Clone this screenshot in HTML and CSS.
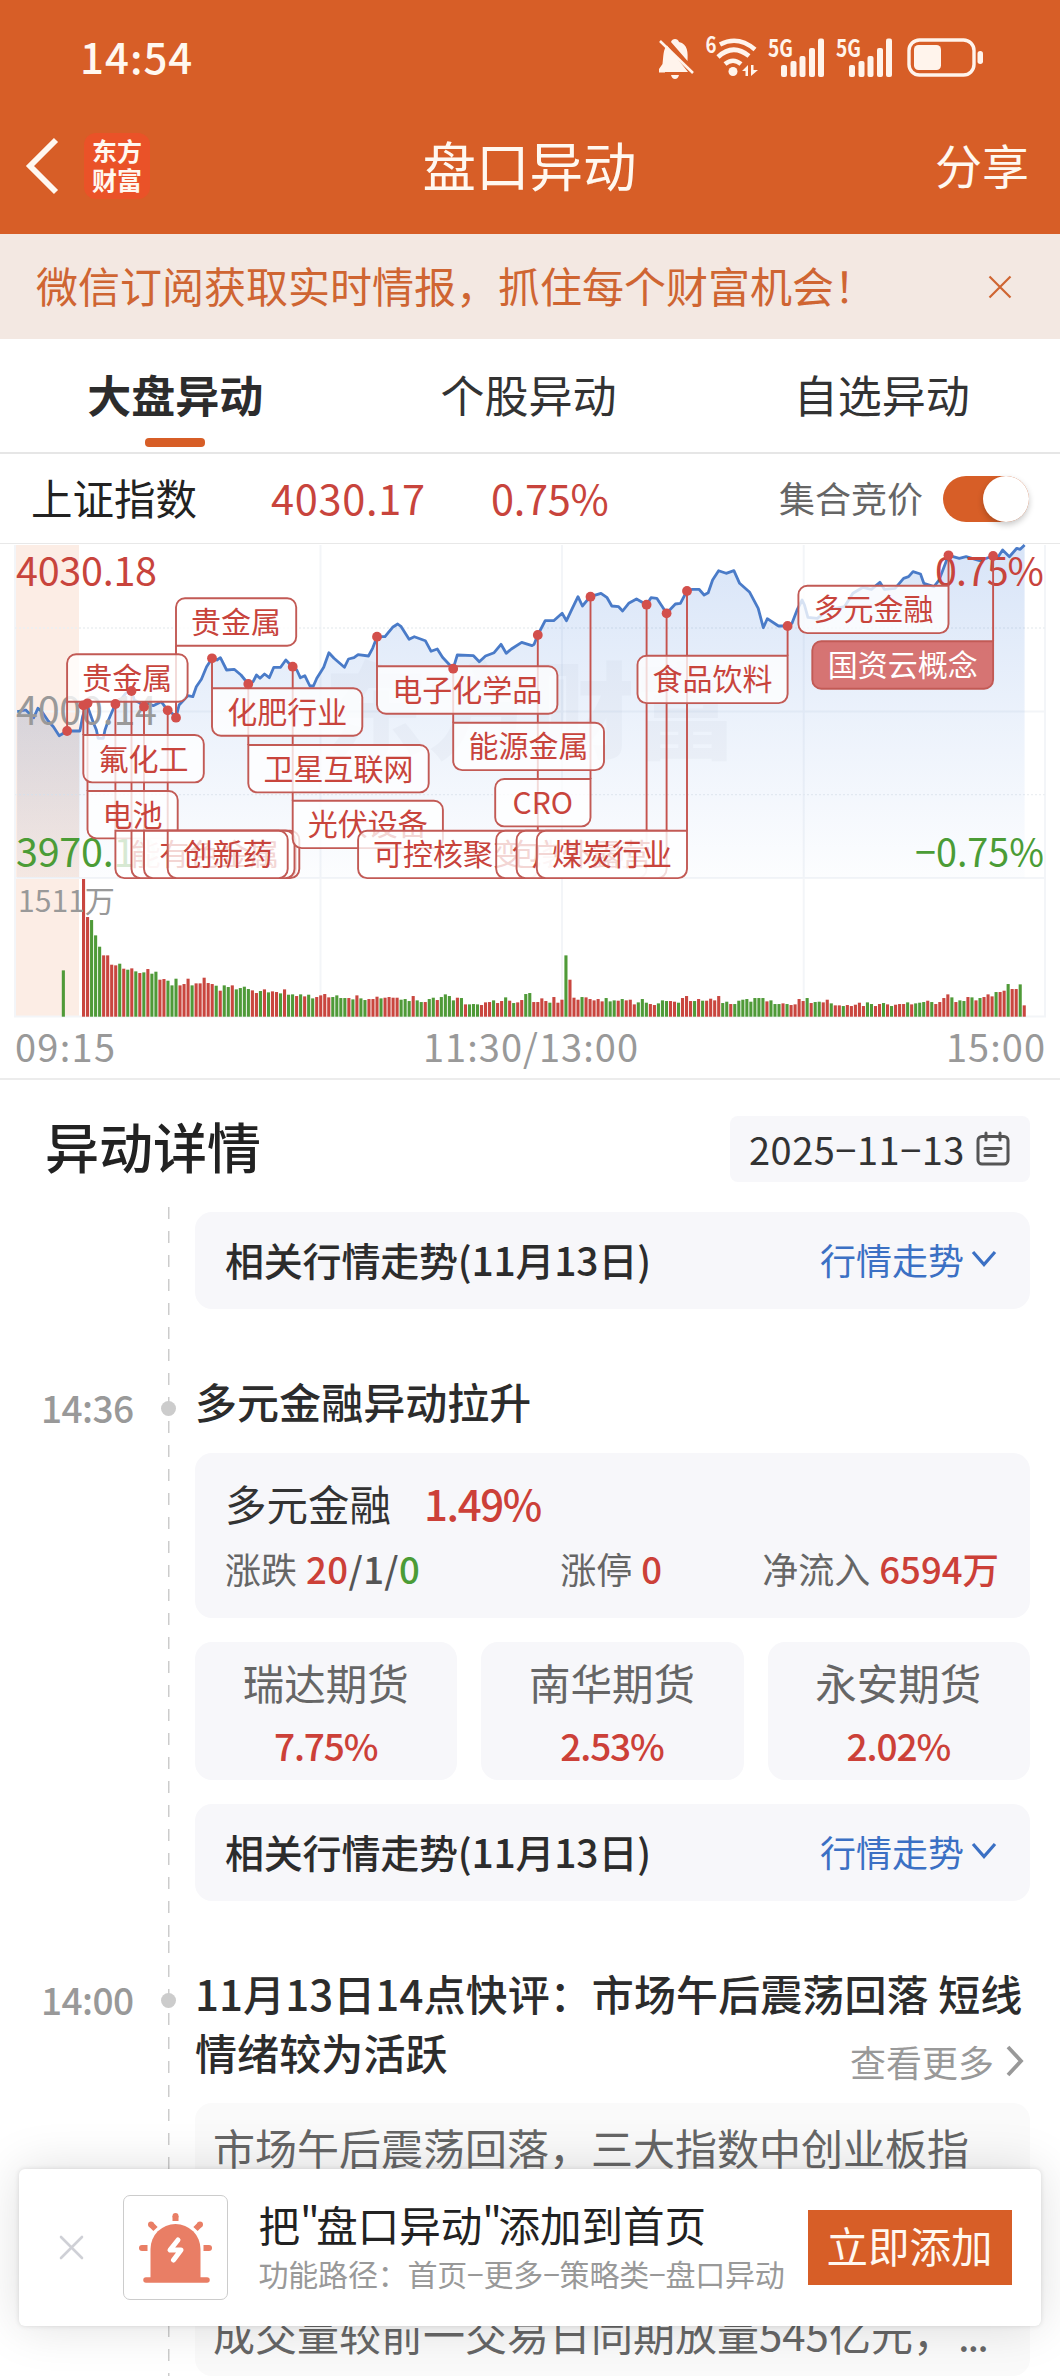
FILE: index.html
```html
<!DOCTYPE html>
<html lang="zh-CN">
<head>
<meta charset="utf-8">
<title>盘口异动</title>
<link rel="stylesheet" href="styles.css">
</head>
<body>
<div class="page">
  <header class="header">
    <div class="status">
      <span class="clock">14:54</span>
      <svg width="350" height="60" viewBox="640 30 350 60" fill="#fff4ec">
        <path d="M665 72.500V72H688L667 45.500C663 49 663.500 57 662.500 64L659 69V72.500ZM671 42C672 38 678 38 679 42C688 44 688 53 687.500 61Z"/>
        <path d="M671 75H679Q678 79 675 79T671 75Z"/>
        <path d="M660 41L693 73" stroke="#fff4ec" stroke-width="2.600"/>
        <text x="705.500" y="53" font-size="22" font-weight="700" textLength="11" lengthAdjust="spacingAndGlyphs">6</text>
        <g fill="none" stroke="#fff4ec" stroke-width="4.600">
          <path d="M720 44.500Q738 35 755 49.500"/>
          <path d="M718 57Q733 43 749 56"/>
          <path d="M725 64Q733 57.500 741 64"/>
        </g>
        <circle cx="733" cy="71.500" r="4.500"/>
        <path d="M742 71L748 65V76H745.500V71ZM751 65V76L758 70H753.500V65Z"/>
        <text x="768" y="56.500" font-size="24" font-weight="700" textLength="25" lengthAdjust="spacingAndGlyphs">5G</text>
        <text x="836" y="56.500" font-size="24" font-weight="700" textLength="25" lengthAdjust="spacingAndGlyphs">5G</text>
        <g id="bars">
          <rect x="781" y="65" width="6" height="12" rx="2"/><rect x="790.500" y="61" width="6" height="16" rx="2"/><rect x="799.500" y="56" width="6" height="21" rx="2"/><rect x="809" y="48" width="6" height="29" rx="2"/><rect x="818" y="38.500" width="6" height="38.500" rx="2"/>
        </g>
        <use href="#bars" x="68"/>
        <rect x="909" y="40" width="65" height="35" rx="10.500" fill="none" stroke="#fff4ec" stroke-width="3.400"/>
        <rect x="914" y="45" width="27" height="25" rx="4.500"/>
        <rect x="977.500" y="51" width="5.500" height="13" rx="2.700"/>
      </svg>
    </div>
    <nav class="nav">
      <div class="nav-left">
        <svg width="34" height="58" viewBox="0 0 34 58" fill="none" stroke="#fff8f0" stroke-width="5.800"><path d="M31 3L5 29L31 55"/></svg>
        <div class="logo"><span>东方</span><span>财富</span></div>
      </div>
      <h1 class="nav-title">盘口异动</h1>
      <span class="share">分享</span>
    </nav>
  </header>

  <div class="notice">
    <span>微信订阅获取实时情报，抓住每个财富机会！</span>
    <svg width="24" height="24" viewBox="0 0 24 24" stroke="#cf6532" stroke-width="2.200"><path d="M1.500 1.500L22.500 22.500M22.500 1.500L1.500 22.500"/></svg>
  </div>

  <div class="tabs">
    <div class="tab active">大盘异动</div>
    <div class="tab">个股异动</div>
    <div class="tab">自选异动</div>
  </div>

  <div class="index-row">
    <span class="index-name">上证指数</span>
    <span class="index-value">4030.17</span>
    <span class="index-pct">0.75%</span>
    <span class="auction">集合竞价</span>
    <span class="toggle"><i></i></span>
  </div>

  <svg class="chart" id="chart" viewBox="0 544 1060 534">
    <defs>
      <linearGradient id="fill" gradientUnits="userSpaceOnUse" x1="0" y1="545" x2="0" y2="878">
        <stop offset="0" stop-color="#6f9de4" stop-opacity=".27"/>
        <stop offset=".5" stop-color="#6f9de4" stop-opacity=".14"/>
        <stop offset="1" stop-color="#6f9de4" stop-opacity=".02"/>
      </linearGradient>
      <linearGradient id="pre" gradientUnits="userSpaceOnUse" x1="0" y1="700" x2="0" y2="878">
        <stop offset="0" stop-color="#8490a8" stop-opacity=".18"/>
        <stop offset="1" stop-color="#8490a8" stop-opacity=".04"/>
      </linearGradient>
    </defs>
    <rect x="15.500" y="545" width="63.500" height="471.500" fill="#fcede5"/>
    <g stroke="#f3f5f8" stroke-width="2" fill="none">
      <path d="M15 545V1016.500H1045V545M15 878H1045M15 711.500H1045M320.500 545V1016M562 545V1016M803.700 545V1016"/>
      <path d="M15 628H1045M15 794.700H1045" stroke="#eceff2" stroke-width="1.300" stroke-dasharray="2 2"/>
    </g>
    <text class="watermark" x="324" y="750" textLength="414" lengthAdjust="spacingAndGlyphs">东方财富</text>
    <g id="price"></g>
    <g id="volume"></g>
    <g class="axis">
      <text class="up" x="16" y="585.500" textLength="141">4030.18</text>
      <text class="flat" x="16" y="725" textLength="141">4000.14</text>
      <text class="down" x="16" y="866.500" textLength="141">3970.10</text>
      <text class="up" x="935" y="585.500" textLength="109">0.75%</text>
      <text class="down" x="915" y="866.500" textLength="129" lengthAdjust="spacingAndGlyphs">−0.75%</text>
      <text class="vol" x="18" y="911.500" textLength="97" lengthAdjust="spacingAndGlyphs">1511万</text>
      <text class="time-label" x="15" y="1062" textLength="100">09:15</text>
      <text class="time-label" x="423" y="1062" textLength="215">11:30/13:00</text>
      <text class="time-label" x="946" y="1062" textLength="99">15:00</text>
    </g>
    <g id="labels"></g>
  </svg>

  <section class="detail-head">
    <h2>异动详情</h2>
    <div class="date">
      <span>2025−11−13</span>
      <svg width="34" height="36" viewBox="0 0 34 36" fill="none" stroke="#555" stroke-width="3" stroke-linecap="round"><rect x="2" y="5.500" width="30" height="27.500" rx="4"/><path d="M10 2V9M24 2V9M9 17.500H25M9 24.500H20"/></svg>
    </div>
  </section>

  <main class="timeline">
    <article class="item first">
      <div></div>
      <div class="rail"></div>
      <div class="body">
        <div class="card trend"><b>相关行情走势(11月13日)</b><span class="link">行情走势<svg width="26" height="18" viewBox="0 0 26 18" fill="none" stroke="#3b70c4" stroke-width="3.200"><path d="M2 2L13 14.500L24 2"/></svg></span></div>
      </div>
    </article>

    <article class="item second">
      <time>14:36</time>
      <div class="rail"><i></i></div>
      <div class="body">
        <h3>多元金融异动拉升</h3>
        <div class="card sector">
          <div class="sector-name"><span>多元金融</span><b class="up">1.49%</b></div>
          <div class="sector-stats">
            <span>涨跌 <b class="ratio"><em class="up">20</em>/1/<em class="down">0</em></b></span>
            <span class="limit">涨停 <b class="up">0</b></span>
            <span>净流入 <b class="up">6594万</b></span>
          </div>
        </div>
        <div class="stocks">
          <div class="stock"><span>瑞达期货</span><b>7.75%</b></div>
          <div class="stock"><span>南华期货</span><b>2.53%</b></div>
          <div class="stock"><span>永安期货</span><b>2.02%</b></div>
        </div>
        <div class="card trend"><b>相关行情走势(11月13日)</b><span class="link">行情走势<svg width="26" height="18" viewBox="0 0 26 18" fill="none" stroke="#3b70c4" stroke-width="3.200"><path d="M2 2L13 14.500L24 2"/></svg></span></div>
      </div>
    </article>

    <article class="item third">
      <time>14:00</time>
      <div class="rail"><i></i></div>
      <div class="body">
        <div class="news-title">
          <h3>11月13日14点快评：市场午后震荡回落 短线<br>情绪较为活跃</h3>
          <span class="more">查看更多<svg width="18" height="32" viewBox="0 0 18 32" fill="none" stroke="#999" stroke-width="3.800"><path d="M2 2L15 16L2 30"/></svg></span>
        </div>
        <div class="news">
          <p>市场午后震荡回落，三大指数中创业板指</p>
          <p class="tail"><span>成交量较前一交易日同期放量545亿元，</span><span class="dots">...</span></p>
        </div>
      </div>
    </article>
  </main>

  <aside class="prompt">
    <svg width="25" height="25" viewBox="0 0 25 25" stroke="#cfd0d6" stroke-width="2.600" stroke-linecap="round"><path d="M2 2L23 23M23 2L2 23"/></svg>
    <div class="siren">
      <svg width="73" height="71" viewBox="0 0 73 71">
        <g stroke="#e97e65" stroke-width="6" fill="none">
          <path d="M36.500 4V9M12 12.500L16.500 17M61 12.500L56.500 17M3 36H8.500M70 36H64.500"/>
          <path d="M7 68H68" stroke-width="5.500" stroke-linecap="round"/>
        </g>
        <g fill="#e97e65"><circle cx="36.500" cy="4" r="3"/><circle cx="12" cy="12.500" r="3"/><circle cx="61" cy="12.500" r="3"/><circle cx="3" cy="36" r="3"/><circle cx="70" cy="36" r="3"/>
        <path d="M11.500 68V37A25 25 0 0 1 61.500 37V68Z"/></g>
        <path d="M39 28L31 38H42L34.500 48" fill="none" stroke="#fff" stroke-width="5" stroke-linecap="round" stroke-linejoin="round"/>
      </svg>
    </div>
    <div class="prompt-text">
      <strong>把<q>盘口异动</q>添加到首页</strong>
      <small>功能路径：首页−更多−策略类−盘口异动</small>
    </div>
    <span class="add">立即添加</span>
  </aside>
</div>
<script src="chart.js"></script>
</body>
</html>
```
FILE: styles.css
```css
* { box-sizing: border-box; }
body {
  margin: 0;
  background: #fff;
  color: #2c2c2c;
  font-family: "Noto Sans CJK SC", "Liberation Sans", sans-serif;
}
h1, h2, h3, p { margin: 0; font-weight: 400; }
em, i { font-style: normal; }
b { font-weight: 500; }
q { quotes: '"' '"'; }
q::before, q::after { letter-spacing: -3.5px; }
svg { display: block; flex: none; }
.up { color: #cc4038; fill: #c8443c; }
.down { color: #4b9c36; fill: #4b9c36; }

.page { position: relative; width: 1060px; height: 2376px; overflow: hidden; }

.header { height: 234px; background: #d75e27; color: #fff8f0; }
.status { display: flex; justify-content: space-between; height: 116px; padding: 30px 70px 0 80px; }
.clock { font-size: 42px; line-height: 52px; font-weight: 500; letter-spacing: 1px; }
.nav { display: grid; grid-template-columns: 1fr auto 1fr; align-items: center; height: 100px; padding: 0 31px 0 25px; }
.nav-left { display: flex; align-items: center; gap: 25px; }
.logo {
  display: flex; flex-direction: column; align-items: center; justify-content: center;
  width: 66px; height: 66px; border-radius: 12px; background: #ea5228;
  font-size: 25px; line-height: 29px; font-weight: 700; padding-bottom: 2px;
}
.nav-title { font-size: 53.5px; line-height: 60px; padding-bottom: 4px; margin-left: 5px; }
.share { justify-self: end; font-size: 47px; line-height: 60px; padding-bottom: 4px; }

.notice {
  display: flex; align-items: center; justify-content: space-between;
  height: 105px; padding: 0 48px 0 36px; background: #f3e8e2;
  color: #cf6532; font-size: 42px; line-height: 60px;
}
.notice span { padding-bottom: 4px; white-space: nowrap; }

.tabs { display: grid; grid-template-columns: repeat(3, 1fr); height: 115px; border-bottom: 2px solid #e6e6e6; }
.tab { display: flex; flex-direction: column; align-items: center; padding: 25px 3px 0 0; font-size: 44px; line-height: 60px; color: #333; }
.active { font-weight: 700; color: #2c2c2c; }
.active::after { content: ""; width: 60px; height: 9px; margin-top: 14px; border-radius: 4px; background: #d75e27; }

.index-row { display: flex; align-items: center; height: 89px; padding: 0 31px; font-size: 41.5px; line-height: 60px; color: #222; }
.index-row > span { padding-bottom: 3px; }
.index-value, .index-pct { color: #c8443c; }
.index-value { width: 220px; margin-left: 74px; letter-spacing: .7px; }
.index-pct { flex: 1; letter-spacing: -.3px; }
.index-row .auction { font-size: 36px; color: #666; margin-right: 20px; }
.index-row .toggle { display: flex; justify-content: flex-end; width: 86px; height: 46px; padding: 0; border-radius: 23px; background: #d75e27; }
.toggle i { width: 46px; height: 46px; border-radius: 50%; background: #fff; box-shadow: 0 3px 6px rgba(0, 0, 0, .22); }

.chart { width: 1060px; height: 537px; border-top: 1px solid #e8e8e8; border-bottom: 2px solid #ececec; }
.chart text { font-family: inherit; }
.watermark { font-size: 105px; font-weight: 900; fill: #5d6b85; opacity: .04; }
.axis text { font-size: 39.5px; }
.axis .flat { fill: #999; }
.axis .vol { font-size: 30px; fill: #999; }
.axis .time-label { font-size: 38px; fill: #999; }
.tag { font-size: 30px; fill: #c8443c; }
.tag-solid { fill: #fff; }

.detail-head { display: flex; justify-content: space-between; align-items: center; padding: 35px 30px 0 45px; height: 102px; }
.detail-head h2 { font-size: 54px; line-height: 66px; font-weight: 500; color: #222; padding-bottom: 5px; }
.date { display: flex; align-items: center; justify-content: space-between; width: 300px; height: 66px; padding: 0 20px 0 19px; border-radius: 8px; background: #f7f7fa; font-size: 38px; line-height: 60px; color: #333; }
.date span { width: 216px; letter-spacing: .5px; white-space: nowrap; }

.timeline { padding-top: 25px; }
.item { display: grid; grid-template-columns: 140px 57px 1fr; margin-right: 30px; }
.first { height: 142px; }
.second { height: 592px; }
.third { height: 500px; }
.item time { padding-top: 28px; padding-left: 41px; font-size: 37px; line-height: 60px; font-weight: 500; letter-spacing: -.6px; color: #999; white-space: nowrap; }
.rail {
  display: flex; justify-content: center; align-items: flex-start;
  background: repeating-linear-gradient(#ccc 0 12px, transparent 12px 24px) center top / 1.5px 100% no-repeat;
}
.rail i { width: 15px; height: 15px; margin-top: 52px; border-radius: 50%; background: #ccc; }
.body { margin-left: -2px; }
.card { border-radius: 17px; background: #f7f7fa; }
.first .card { margin-top: 5px; }
.trend { display: flex; align-items: center; justify-content: space-between; height: 97px; padding: 0 33px 3px 30px; font-size: 39px; line-height: 60px; }
.trend b { color: #2c2c2c; letter-spacing: -.2px; }
.link { display: flex; align-items: center; gap: 7px; font-size: 36px; color: #3b70c4; }
.body h3 { font-size: 42px; line-height: 59px; font-weight: 500; color: #2c2c2c; letter-spacing: .05px; white-space: nowrap; }
.second h3 { padding-top: 22px; height: 104px; }
.sector { height: 165px; padding: 19px 31px 0 30px; }
.sector-name { display: flex; gap: 33px; font-size: 41.5px; line-height: 62px; color: #333; }
.sector-name b { font-size: 42px; letter-spacing: -1.4px; }
.sector-stats { display: flex; justify-content: space-between; font-size: 36px; line-height: 60px; padding-top: 4px; color: #666; white-space: nowrap; }
.sector-stats b { font-size: 36.5px; margin-left: 1px; }
.ratio { color: #555; letter-spacing: .4px; }
.limit { margin-left: 40px; }
.stocks { display: grid; grid-template-columns: repeat(3, 1fr); gap: 24px; margin: 24px 0; }
.stock { display: flex; flex-direction: column; align-items: center; height: 138px; padding: 10px 1px 0 0; border-radius: 17px; background: #f7f7fa; }
.stock span { font-size: 41.5px; line-height: 60px; color: #666; }
.stock b { font-size: 37px; line-height: 66px; letter-spacing: -1.1px; color: #cc4038; }
.news-title { display: flex; align-items: flex-end; height: 162px; padding-top: 22px; }
.third h3 { width: 655px; align-self: flex-start; letter-spacing: .1px; }
.more { display: flex; align-items: center; gap: 12px; padding-bottom: 12px; font-size: 36px; line-height: 60px; color: #999; white-space: nowrap; }
.news { height: 273px; padding: 12px 18px; border-radius: 17px; background: #fafafa; font-size: 42px; line-height: 63px; color: #666; white-space: nowrap; }
.tail { display: flex; gap: 3px; padding-top: 123px; }
.dots { letter-spacing: -2px; }

.prompt {
  position: absolute; left: 18.5px; top: 2169px; width: 1022px; height: 157px;
  display: flex; align-items: center; padding: 0 29px 0 40px;
  border-radius: 6px; background: #fff; box-shadow: 0 0 50px rgba(0, 0, 0, .13), 0 0 5px rgba(0, 0, 0, .12);
}
.siren { display: flex; align-items: center; justify-content: center; width: 105px; height: 105px; margin: 0 31px 0 39px; border: 1.5px solid #ccc; border-radius: 7px; }
.prompt-text { display: flex; flex-direction: column; flex: 1; padding-bottom: 2px; white-space: nowrap; }
.prompt-text strong { font-size: 41.5px; line-height: 52px; font-weight: 400; color: #222; }
.prompt-text small { font-size: 30px; line-height: 46px; letter-spacing: -.2px; color: #999; }
.add { width: 204px; height: 75px; background: #d75e27; color: #fff8f0; font-size: 41.5px; line-height: 71px; text-align: center; white-space: nowrap; }
```
FILE: chart.js
```js
const NS = "http://www.w3.org/2000/svg";
function add(parent, name, attrs, text) {
  const el = document.createElementNS(NS, name);
  for (const k in attrs) el.setAttribute(k, attrs[k]);
  if (text) el.textContent = text;
  parent.appendChild(el);
  return el;
}

// Price series in thirds of a unit: morning session, then afternoon session.
const morning = "50,545 75,540 98,563 110,535 122,545 140,573 155,590 172,617 195,603 232,603 240,560 252,520 258,540 270,575 280,600 285,625 300,625 305,600 315,570 335,522 350,510 365,490 382,483 390,510 405,518 418,530 430,520 445,527 468,515 487,541 500,550 511,563 520,525 545,497 560,500 570,470 585,448 600,410 616,385 630,390 640,383 658,420 680,418 700,435 721,462 735,455 745,435 755,445 768,432 782,443 795,412 815,412 830,390 849,410 862,420 872,443 885,437 900,468 910,468 920,445 940,412 955,368 970,385 1000,412 1012,387 1028,383 1040,374 1070,378 1082,355 1095,320 1118,320 1140,292 1155,282 1165,290 1188,328 1203,320 1235,332 1252,364 1270,357 1285,382 1316,416 1328,375 1375,377 1392,395 1410,378 1435,368 1455,343 1470,370 1485,357 1515,337 1545,347";
const afternoon = "12,343 23,315 45,272 70,272 95,250 108,272 125,235 142,200 155,228 178,200 210,190 228,203 242,228 262,230 274,243 292,220 315,207 345,224 358,203 375,205 388,225 404,250 430,222 445,220 464,183 480,178 500,178 515,195 527,188 540,150 558,122 580,130 603,122 620,160 650,187 675,235 690,293 702,266 735,288 761,288 775,280 790,240 805,210 812,225 822,262 850,265 880,240 930,230 955,190 985,172 1010,178 1035,157 1048,178 1080,175 1105,145 1120,140 1133,125 1155,132 1165,160 1195,170 1210,150 1238,76 1270,85 1290,80 1330,92 1369,78 1385,80 1398,60 1418,80 1440,55 1450,58 1463,45";
const project = (series, x0, sx) => series.split(" ").map(p => {
  const [x, y] = p.split(",").map(Number);
  return [x0 + x / sx, 530 + y / 3];
});
const points = project(morning, 0, 2.904).concat(project(afternoon, 530, 2.958));
const line = "M" + points.map(p => p[0].toFixed(1) + " " + p[1].toFixed(1)).join("L");
const price = document.getElementById("price");
add(price, "path", { d: line + "V878H17Z", fill: "url(#fill)" });
const open = points.filter(p => p[0] < 80);
add(price, "path", { d: "M" + open.map(p => p.join(" ")).join("L") + "V878H17Z", fill: "url(#pre)" });
add(price, "path", { d: line, fill: "none", stroke: "#4a7bc8", "stroke-width": 2.8, "stroke-linejoin": "round" });

// Minute volume: direction and distance of the bar top from the pane top, in thirds.
const volume = "r27 r141 g150 g196 g230 r256 r256 r284 r286 g281 r296 g299 r295 g304 r309 g307 r297 g311 g305 r329 r327 g332 g346 g326 r346 r342 r326 g346 r340 r340 r323 r339 r342 g347 r362 g346 g351 r346 g358 g354 g350 g357 r361 r369 g363 r358 g367 r364 r366 g370 r358 g374 g373 r378 g373 r379 g374 g385 r381 r376 r372 r382 g381 g376 g384 g384 r384 g388 r376 g385 g390 r387 r387 r380 g385 r383 r381 r383 r383 g389 g387 g393 r378 g391 g396 r396 g387 g383 r390 g381 g373 g378 g391 r383 g384 r403 g403 g402 g403 r405 r397 r396 g391 r399 r393 g382 r392 g399 r397 r390 g372 g369 r396 r396 r385 r393 g398 r381 r398 r389 g256 r329 r383 r389 g381 r382 r387 r391 r387 r394 g384 g394 g391 r392 g387 r391 r389 r403 g397 g387 g398 r402 r405 g400 g391 g393 r393 r395 g398 r384 r378 r393 g393 r387 g392 r392 r386 r391 r378 g399 g395 r402 g402 g392 g389 g387 g395 g384 g384 g384 r394 g391 g402 g402 r400 g402 r405 r403 r387 r393 g384 r399 g396 g395 r397 r389 g400 r406 r406 g408 r405 r408 r404 r398 r408 g397 g402 r408 r402 g399 r403 g408 r404 r402 r402 g397 r403 g400 g398 g396 r392 g396 r402 r396 r384 r373 g382 r396 g391 g393 r381 g382 r391 g384 r381 r373 r379 g366 r366 r362 g342 r357 r357 g343 r406".split(" ");
const pane = document.getElementById("volume");
function bar(x, item) {
  const h = (440 - Number(item.slice(1))) / 3;
  add(pane, "rect", { x, y: 1016.7 - h, width: 3.1, height: h, fill: item[0] === "r" ? "#c9463f" : "#4f9a38" });
}
bar(61.8, "g301");
volume.forEach((item, i) => bar(82 + i * 4.02, item));

// Event tags: text, left, top, width, stem side, dot y.
const tags = [
  ["贵金属", 67.1, 654.3, 120.5, "L", 731],
  ["贵金属", 176, 598.3, 120.2, "L", 717.7],
  ["氟化工", 83.3, 735, 120.5, "L", 705.3],
  ["电池", 87.5, 791, 90.2, "L", 703.3],
  ["能存储概念", 115.4, 830.7, 180.5, "L", 704],
  ["", 131.5, 830.7, 167.8, "L", 691],
  ["有色金属", 144, 830.7, 150.5, "L", 706.7],
  ["创新药", 167.7, 830.7, 120, "L", 710.3],
  ["化肥行业", 212, 688.3, 150.3, "L", 658.3],
  ["卫星互联网", 248.3, 745, 180.4, "L", 684],
  ["光伏设备", 292.7, 800.7, 150.2, "L", 666.7],
  ["电子化学品", 377, 666.3, 180.4, "L", 636.7],
  ["能源金属", 453.2, 722.7, 150.8, "L", 668.7],
  ["可控核聚变", 358.1, 830.7, 179.7, "R", 635],
  ["CRO", 495.2, 779, 95.3, "R", 596.7],
  ["包装印刷", 496.2, 830.7, 150.4, "R", 604.7],
  ["户外露营", 516.6, 830.7, 150, "R", 613.3],
  ["煤炭行业", 536.8, 830.7, 150.2, "R", 591],
  ["食品饮料", 637.5, 655.7, 150.1, "R", 626],
  ["多元金融", 798.4, 585.7, 150.1, "R", 555.3],
  ["国资云概念", 812.3, 641.3, 180.8, "R", 556]
];
const H = 47.4, R = 9;
const layer = document.getElementById("labels");
const stemX = t => t[4] === "L" ? t[1] : t[1] + t[3];
tags.forEach(t => {
  const edge = t[5] > t[2] ? t[2] + H : t[2];
  add(layer, "path", { d: `M${stemX(t)} ${edge}V${t[5]}`, stroke: "#c5534e", "stroke-width": 1.9 });
});
tags.forEach((t, i) => {
  const [text, x, y, w, side, dot] = t;
  const solid = i === tags.length - 1;
  const below = dot > y;
  const r = [R, R, R, R]; // top-left, top-right, bottom-right, bottom-left
  r[side === "L" ? (below ? 3 : 0) : (below ? 2 : 1)] = 0;
  const d = `M${x + r[0]} ${y}H${x + w - r[1]}a${r[1]} ${r[1]} 0 0 1 ${r[1]} ${r[1]}V${y + H - r[2]}a${r[2]} ${r[2]} 0 0 1 ${-r[2]} ${r[2]}H${x + r[3]}a${r[3]} ${r[3]} 0 0 1 ${-r[3]} ${-r[3]}V${y + r[0]}a${r[0]} ${r[0]} 0 0 1 ${r[0]} ${-r[0]}Z`;
  add(layer, "path", { d, fill: solid ? "#d46664" : "#fff", "fill-opacity": solid ? 0.9 : 0.78, stroke: "#c25a55", "stroke-width": 1.9 });
  if (text) add(layer, "text", { x: x + w / 2, y: y + 34.5, "text-anchor": "middle", class: solid ? "tag tag-solid" : "tag" }, text);
});
tags.forEach(t => add(layer, "circle", { cx: stemX(t), cy: t[5], r: 4.9, fill: "#d34f4b" }));
```
